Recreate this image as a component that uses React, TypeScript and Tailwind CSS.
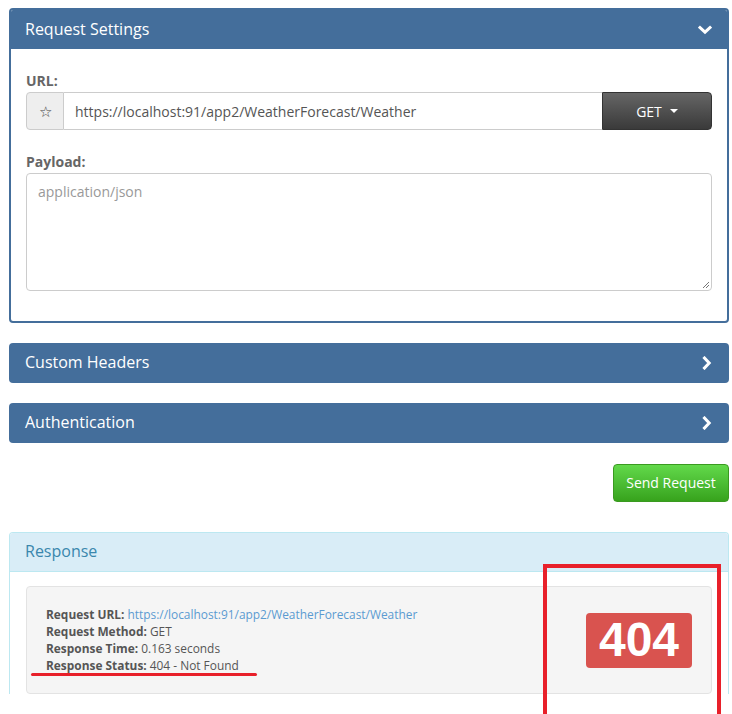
import React from 'react';

const ChevronDown = () => (
  <svg width="14" height="10" viewBox="0 0 14 10" className="block">
    <path d="M2 2.5 L7 7.2 L12 2.5" fill="none" stroke="white" strokeWidth="3" strokeLinecap="square" />
  </svg>
);

const ChevronRight = () => (
  <svg width="10" height="14" viewBox="0 0 10 14" className="block">
    <path d="M2.5 2 L7.2 7 L2.5 12" fill="none" stroke="white" strokeWidth="3" strokeLinecap="square" />
  </svg>
);

const CollapsedPanel = ({ title }: { title: string }) => (
  <div className="flex h-[40px] items-center justify-between rounded-[4px] bg-[#446e9b] pl-[16px] pr-[17px]">
    <span className="pb-[3px] text-[16px] text-white">{title}</span>
    <ChevronRight />
  </div>
);

export default function App() {
  return (
    <div className="relative h-[714px] overflow-hidden bg-white pl-[9px] pt-[8px] font-['Open_Sans',sans-serif] text-[#555]">
      <div className="w-[720px]">
        {/* Request settings */}
        <div className="overflow-hidden rounded-[4px] border-2 border-[#446e9b]">
          <div className="flex h-[39px] items-center justify-between bg-[#446e9b] pl-[14px] pr-[15px]">
            <span className="pb-[2px] text-[16px] text-white">Request Settings</span>
            <ChevronDown />
          </div>
          <div className="px-[15px] pb-[30px] pt-[22px]">
            <div className="text-[14px] font-bold leading-[20px] text-[#666]">URL:</div>
            <div className="mt-[1px] flex h-[38px]">
              <div className="flex w-[38px] items-center justify-center rounded-l-[4px] border border-[#ccc] bg-[#eee] text-[15px] text-[#444]">
                ☆
              </div>
              <div className="flex flex-1 items-center border-y border-[#ccc] pl-[11px] text-[14px] text-[#555]">
                https://localhost:91/app2/WeatherForecast/Weather
              </div>
              <div className="flex w-[110px] items-center justify-center gap-[8px] rounded-r-[4px] border border-[#333] bg-gradient-to-b from-[#666] to-[#3a3a3a] text-[14px] text-white">
                <span>GET</span>
                <svg width="8" height="4" viewBox="0 0 8 4"><path d="M0 0 H8 L4 4 Z" fill="white" /></svg>
              </div>
            </div>
            <div className="mt-[22px] text-[14px] font-bold leading-[20px] text-[#666]">Payload:</div>
            <div className="relative mt-[1px] h-[118px] rounded-[4px] border border-[#ccc] pl-[11px] pt-[7px] text-[14px] text-[#999]">
              application/json
              <svg width="8" height="8" viewBox="0 0 8 8" className="absolute bottom-[1px] right-[1px]">
                <path d="M1 7 L7 1 M4 7 L7 4" stroke="#777" strokeWidth="1" />
              </svg>
            </div>
          </div>
        </div>

        <div className="mt-[20px] flex flex-col gap-[20px]">
          <CollapsedPanel title="Custom Headers" />
          <CollapsedPanel title="Authentication" />
        </div>

        <div className="mt-[21px] flex justify-end">
          <button className="h-[38px] w-[116px] rounded-[4px] border border-[#3a9a20] bg-gradient-to-b from-[#62d94a] to-[#37a31c] pb-[1px] text-[14px] text-white">
            Send Request
          </button>
        </div>

        {/* Response */}
        <div className="mt-[30px] overflow-hidden rounded-t-[4px] border border-b-0 border-[#bce8f1]">
          <div className="flex h-[39px] items-center border-b border-[#bce8f1] bg-[#d9edf7] pb-[2px] pl-[15px] text-[16px] text-[#3a87ad]">
            Response
          </div>
          <div className="px-[16px] pt-[14px]">
            <div className="flex h-[108px] items-center justify-between rounded-[4px] border border-[#e3e3e3] bg-[#f5f5f5] pl-[19px] pr-[19px]">
              <div className="text-[11.9px] leading-[17px] text-[#555]">
                <div>
                  <b>Request URL:</b> <span className="text-[#5b9bd1]">https://localhost:91/app2/WeatherForecast/Weather</span>
                </div>
                <div>
                  <b>Request Method:</b> GET
                </div>
                <div>
                  <b>Response Time:</b> 0.163 seconds
                </div>
                <div>
                  <b>Response Status:</b> 404 - Not Found
                </div>
              </div>
              <div className="flex h-[55px] w-[106px] items-center justify-center rounded-[4px] bg-[#d9534f] font-['Liberation_Sans',Arial,sans-serif] text-[48px] font-bold leading-none text-white">
                404
              </div>
            </div>
          </div>
        </div>
      </div>

      {/* annotations */}
      <div className="absolute left-[31px] top-[673px] h-[3px] w-[226px] rounded-full bg-[#e8202a]" />
      <div className="absolute left-[543px] top-[564px] h-[160px] w-[178px] border-[4px] border-[#e8202a]" />
    </div>
  );
}
